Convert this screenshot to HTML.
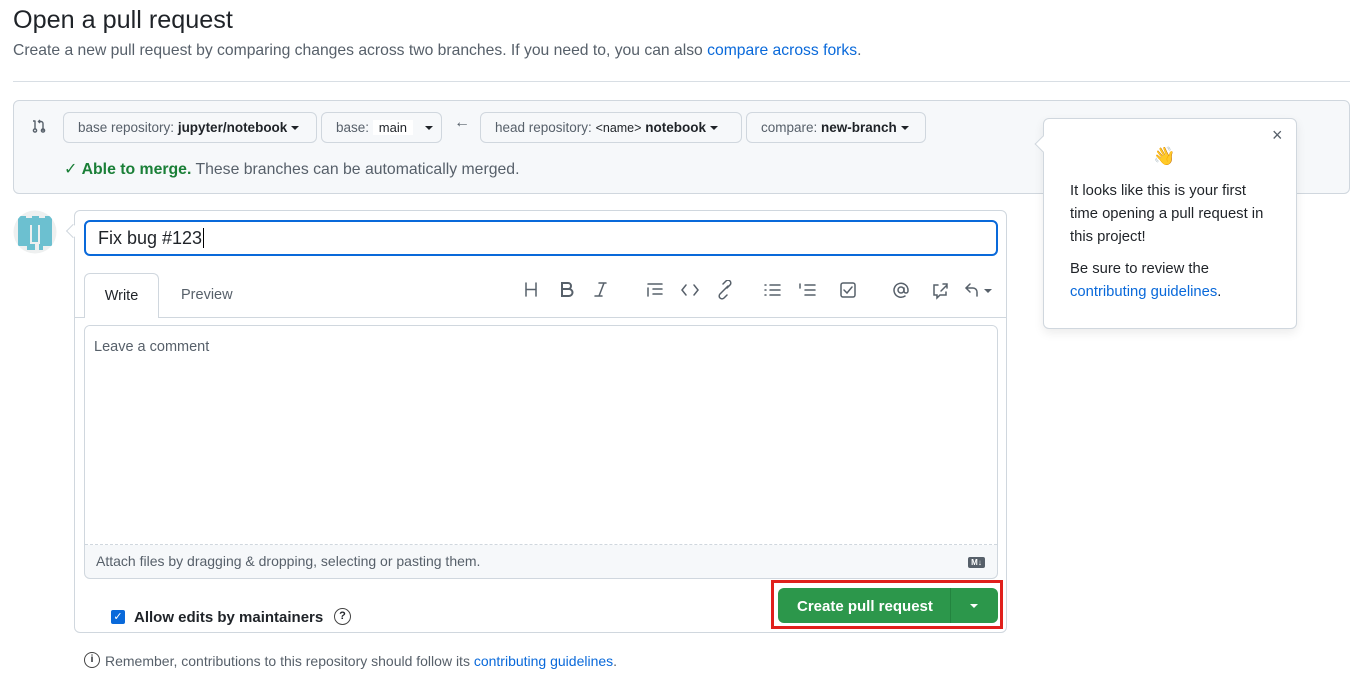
<!DOCTYPE html>
<html><head><meta charset="utf-8"><style>
*{box-sizing:border-box;margin:0;padding:0}
body{width:1363px;height:678px;background:#fff;font-family:"Liberation Sans",Arial,sans-serif;color:#1f2328;position:relative;overflow:hidden}
.a{position:absolute}
a{color:#0969da;text-decoration:none}
.btn{position:absolute;top:112px;height:31px;border:1px solid #d0d7de;border-radius:6px;background:#f6f8fa;font-size:13.5px;line-height:29px;padding-left:14px;color:#57606a;white-space:nowrap}
.btn b{color:#1f2328;font-weight:600}
.caret{display:inline-block;width:0;height:0;border-left:4px solid transparent;border-right:4px solid transparent;border-top:4px solid #1f2328;vertical-align:middle;margin-left:4px}
</style></head><body>
<div class="a" style="left:13px;top:6px;font-size:25.2px;">Open a pull request</div>
<div class="a" style="left:13px;top:42px;font-size:15.7px;color:#57606a">Create a new pull request by comparing changes across two branches. If you need to, you can also <a>compare across forks</a>.</div>
<div class="a" style="left:13px;top:81px;width:1337px;height:1px;background:#d8dee4"></div>

<div class="a" style="left:13px;top:100px;width:1337px;height:94px;background:#f6f8fa;border:1px solid #d0d7de;border-radius:6px"></div>
<svg class="a" style="left:31px;top:118px" width="16" height="16" viewBox="0 0 16 16" fill="none" stroke="#57606a" stroke-width="1.4"><circle cx="4" cy="12.5" r="1.6"/><path d="M4 3v7.8M2 3h2.5M12 13V5.5a2 2 0 0 0-2-2H7.5M9 2l-1.5 1.5L9 5"/><circle cx="12" cy="12.5" r="1.6"/></svg>
<div class="btn" style="left:63px;width:254px">base repository: <b>jupyter/notebook</b><span class="caret"></span></div>
<div class="btn" style="left:321px;width:121px">base: <span style="background:#fff;color:#1f2328;padding:0 6px;font-size:13px">main</span> <span class="caret" style="margin-left:8px"></span></div>
<div class="a" style="left:454px;top:114px;font-size:16px;color:#57606a">←</div>
<div class="btn" style="left:480px;width:262px">head repository: <span style="color:#1f2328;font-size:12.5px">&lt;name&gt;</span> <b>notebook</b><span class="caret"></span></div>
<div class="btn" style="left:746px;width:180px">compare: <b>new-branch</b><span class="caret"></span></div>
<div class="a" style="left:64px;top:159px;font-size:15.8px;color:#57606a"><span style="color:#1a7f37">✓ <b>Able to merge.</b></span> These branches can be automatically merged.</div>

<svg class="a" style="left:13px;top:210px" width="44" height="44" viewBox="0 0 44 44"><defs><clipPath id="c"><circle cx="22" cy="22" r="21.5"/></clipPath></defs><g clip-path="url(#c)"><rect width="44" height="44" fill="#eef0f0"/>
<g fill="#6cc0d0"><rect x="5" y="6" width="34" height="9"/><rect x="5" y="15" width="12" height="21"/><rect x="27" y="15" width="12" height="21"/><rect x="19" y="15" width="6" height="17"/><rect x="14" y="34" width="8" height="6"/><rect x="26" y="34" width="4" height="6"/></g>
<rect x="13" y="3" width="6" height="5" fill="#eef0f0"/><rect x="26" y="3" width="6" height="5" fill="#eef0f0"/></g></svg>

<div class="a" style="left:74px;top:210px;width:933px;height:423px;border:1px solid #d0d7de;border-radius:6px"></div>
<div class="a" style="left:68px;top:226px;width:10px;height:10px;background:#fff;border-left:1px solid #d0d7de;border-bottom:1px solid #d0d7de;transform:rotate(45deg)"></div>
<div class="a" style="left:84px;top:220px;width:914px;height:36px;border:2px solid #0969da;border-radius:6px;font-size:18px;padding:5px 12px;line-height:22px">Fix bug #123<span style="border-left:1px solid #000;margin-left:1px"></span></div>
<div class="a" style="left:75px;top:317px;width:931px;height:1px;background:#d0d7de"></div>
<div class="a" style="left:84px;top:273px;width:75px;height:45px;border:1px solid #d0d7de;border-bottom:none;background:#fff;border-radius:6px 6px 0 0;font-size:14.5px;text-align:center;line-height:44px">Write</div>
<div class="a" style="left:181px;top:287px;font-size:14.5px;color:#57606a">Preview</div>

<svg class="a" style="left:520px;top:280px" width="480" height="20" viewBox="0 0 480 20" fill="none" stroke="#57606a" stroke-width="1.5" stroke-linecap="round">
<path d="M6 3v13M16 3v13M6 9.5h10"/>
<path d="M42 3h6a3 3 0 0 1 0 6h-6zM42 9h7a3.5 3.5 0 0 1 0 7h-7z" stroke-width="2"/>
<path d="M79 3h7M75 16h7M84 3l-5 13"/>
<path d="M128 4h14M133 9h9M133 14h9M128 8v8"/>
<path d="M166 5l-4 5 4 5M174 5l4 5-4 5"/>
<path d="M203 11l-3 3a2.8 2.8 0 0 0 4 4l3-3M207 8l3-3a2.8 2.8 0 0 0-4-4l-3 3M202 12l6-6"/>
<path d="M250 5h10M250 10h10M250 15h10M245 5h1M245 10h1M245 15h1"/>
<path d="M285 5h10M285 10h10M285 15h10M280 4v4"/>
<rect x="321" y="3" width="14" height="14" rx="2"/><path d="M324 10l3 3 5-6"/>
<circle cx="381" cy="10" r="3"/><path d="M384 8v3a2 2 0 0 0 4 0v-1a7 7 0 1 0-3 6"/>
<path d="M418 5h-4v10h3v3l3-3h6v-3M421 11l6-6M423 4h4v4"/>
<path d="M450 4l-4 4 4 4M446 8h7a4 4 0 0 1 4 4v4"/>
</svg>
<div class="a" style="left:984px;top:289px;width:0;height:0;border-left:4px solid transparent;border-right:4px solid transparent;border-top:4px solid #57606a"></div>

<div class="a" style="left:84px;top:325px;width:914px;height:254px;border:1px solid #d0d7de;border-radius:6px;background:#f6f8fa;overflow:hidden">
<div style="height:219px;background:#fff;border-bottom:1px dashed #d0d7de;padding:13px 9px;font-size:14.5px;color:#57606a">Leave a comment</div>
<div style="padding:8px 11px;font-size:14px;color:#57606a">Attach files by dragging &amp; dropping, selecting or pasting them.</div>
</div>
<div class="a" style="left:968px;top:557px;width:17px;height:11px;background:#57606a;border-radius:2px;color:#fff;font-size:8px;font-weight:bold;line-height:11px;text-align:center">M↓</div>

<div class="a" style="left:771px;top:580px;width:232px;height:49px;border:3px solid #e0201c"></div>
<div class="a" style="left:778px;top:588px;width:220px;height:35px;background:#2c974b;border-radius:6px;color:#fff;font-size:15px;font-weight:bold;line-height:37px">
<span style="position:absolute;left:19px">Create pull request</span>
<span style="position:absolute;left:172px;top:0;width:1px;height:35px;background:#23843f"></span>
<span style="position:absolute;left:192px;top:16px;width:0;height:0;border-left:4px solid transparent;border-right:4px solid transparent;border-top:4px solid #fff"></span>
</div>

<div class="a" style="left:111px;top:610px;width:14px;height:14px;background:#0969da;border-radius:2px;color:#fff;font-size:11px;line-height:14px;text-align:center">✓</div>
<div class="a" style="left:134px;top:609px;font-size:15px;font-weight:bold">Allow edits by maintainers</div>
<div class="a" style="left:334px;top:608px;width:17px;height:17px;border:1.5px solid #444;border-radius:50%;font-size:11px;text-align:center;line-height:14px;font-weight:bold">?</div>

<div class="a" style="left:84px;top:652px;width:16px;height:16px;border:1.5px solid #444;border-radius:50%;font-size:10px;text-align:center;line-height:13px;font-weight:bold">i</div>
<div class="a" style="left:105px;top:653px;font-size:14px;color:#57606a">Remember, contributions to this repository should follow its <a>contributing guidelines</a>.</div>

<div class="a" style="left:1043px;top:118px;width:254px;height:211px;background:#fff;border:1px solid #d0d7de;border-radius:6px;box-shadow:0 4px 10px rgba(0,0,0,.08)"></div>
<div class="a" style="left:1037px;top:138px;width:12px;height:12px;background:#fff;border-left:1px solid #d0d7de;border-bottom:1px solid #d0d7de;transform:rotate(45deg)"></div>
<div class="a" style="left:1272px;top:125px;font-size:18px;color:#57606a">×</div>
<div class="a" style="left:1153px;top:146px;font-size:18px">👋</div>
<div class="a" style="left:1070px;top:180px;font-size:14.8px;line-height:23px;width:200px">It looks like this is your first time opening a pull request in this project!</div>
<div class="a" style="left:1070px;top:258px;font-size:14.8px;line-height:23px;width:200px">Be sure to review the <a>contributing guidelines</a>.</div>
</body></html>
